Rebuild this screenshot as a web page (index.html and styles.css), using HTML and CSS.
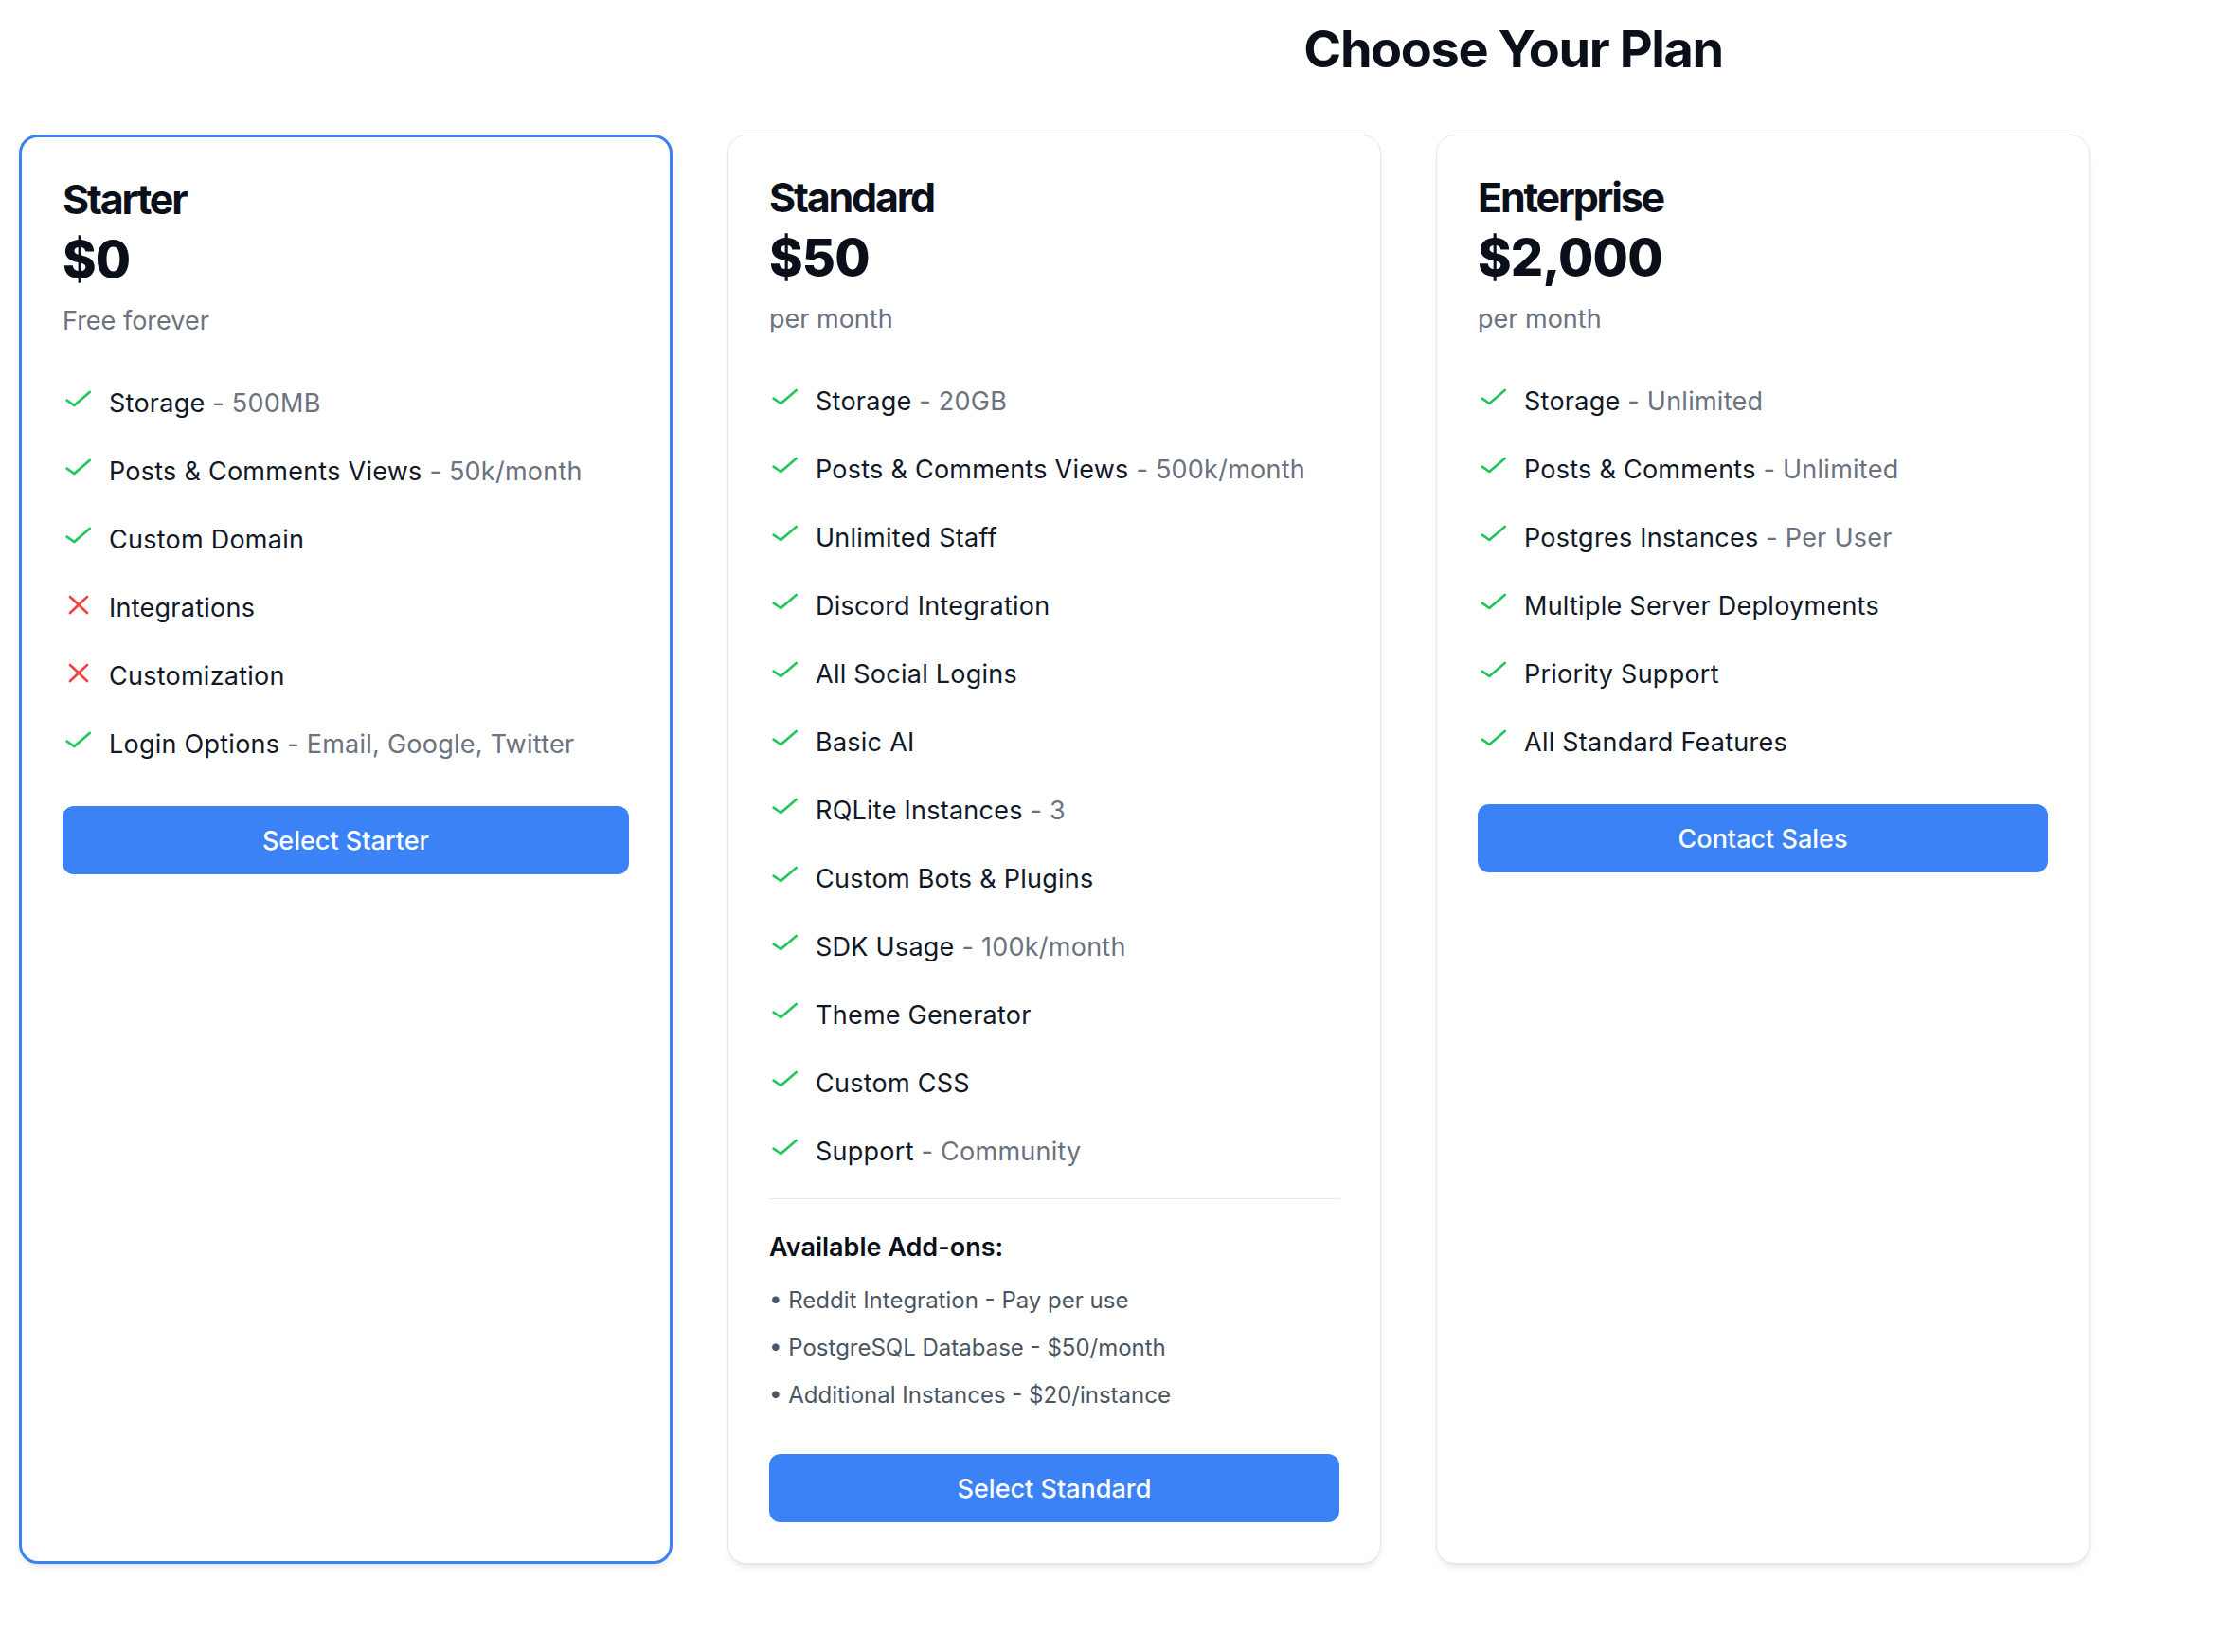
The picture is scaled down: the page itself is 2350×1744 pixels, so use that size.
FILE: index.html
```html
<!DOCTYPE html>
<html lang="en">
<head>
<meta charset="utf-8">
<title>Choose Your Plan</title>
<link rel="stylesheet" href="styles.css">
</head>
<body>
<main class="page">
  <h1 class="title">Choose Your Plan</h1>
  <div class="plans">
    <section class="plan plan--selected">
      <h2 class="plan-name">Starter</h2>
      <div class="plan-price">$0</div>
      <p class="plan-period">Free forever</p>
      <ul class="features">
        <li class="feature"><svg class="icon icon-check" viewBox="0 0 30 22"><path d="M2.7 11.7 L10.3 17 L26.7 3"/></svg><span>Storage<span class="detail"> - 500MB</span></span></li>
        <li class="feature"><svg class="icon icon-check" viewBox="0 0 30 22"><path d="M2.7 11.7 L10.3 17 L26.7 3"/></svg><span>Posts &amp; Comments Views<span class="detail"> - 50k/month</span></span></li>
        <li class="feature"><svg class="icon icon-check" viewBox="0 0 30 22"><path d="M2.7 11.7 L10.3 17 L26.7 3"/></svg><span>Custom Domain</span></li>
        <li class="feature"><svg class="icon icon-x" viewBox="0 0 30 22"><path d="M6 3 L24 20 M24 3 L6 20"/></svg><span>Integrations</span></li>
        <li class="feature"><svg class="icon icon-x" viewBox="0 0 30 22"><path d="M6 3 L24 20 M24 3 L6 20"/></svg><span>Customization</span></li>
        <li class="feature"><svg class="icon icon-check" viewBox="0 0 30 22"><path d="M2.7 11.7 L10.3 17 L26.7 3"/></svg><span>Login Options<span class="detail"> - Email, Google, Twitter</span></span></li>
      </ul>
      <button class="plan-btn">Select Starter</button>
    </section>

    <section class="plan">
      <h2 class="plan-name">Standard</h2>
      <div class="plan-price">$50</div>
      <p class="plan-period">per month</p>
      <ul class="features">
        <li class="feature"><svg class="icon icon-check" viewBox="0 0 30 22"><path d="M2.7 11.7 L10.3 17 L26.7 3"/></svg><span>Storage<span class="detail"> - 20GB</span></span></li>
        <li class="feature"><svg class="icon icon-check" viewBox="0 0 30 22"><path d="M2.7 11.7 L10.3 17 L26.7 3"/></svg><span>Posts &amp; Comments Views<span class="detail"> - 500k/month</span></span></li>
        <li class="feature"><svg class="icon icon-check" viewBox="0 0 30 22"><path d="M2.7 11.7 L10.3 17 L26.7 3"/></svg><span>Unlimited Staff</span></li>
        <li class="feature"><svg class="icon icon-check" viewBox="0 0 30 22"><path d="M2.7 11.7 L10.3 17 L26.7 3"/></svg><span>Discord Integration</span></li>
        <li class="feature"><svg class="icon icon-check" viewBox="0 0 30 22"><path d="M2.7 11.7 L10.3 17 L26.7 3"/></svg><span>All Social Logins</span></li>
        <li class="feature"><svg class="icon icon-check" viewBox="0 0 30 22"><path d="M2.7 11.7 L10.3 17 L26.7 3"/></svg><span>Basic AI</span></li>
        <li class="feature"><svg class="icon icon-check" viewBox="0 0 30 22"><path d="M2.7 11.7 L10.3 17 L26.7 3"/></svg><span>RQLite Instances<span class="detail"> - 3</span></span></li>
        <li class="feature"><svg class="icon icon-check" viewBox="0 0 30 22"><path d="M2.7 11.7 L10.3 17 L26.7 3"/></svg><span>Custom Bots &amp; Plugins</span></li>
        <li class="feature"><svg class="icon icon-check" viewBox="0 0 30 22"><path d="M2.7 11.7 L10.3 17 L26.7 3"/></svg><span>SDK Usage<span class="detail"> - 100k/month</span></span></li>
        <li class="feature"><svg class="icon icon-check" viewBox="0 0 30 22"><path d="M2.7 11.7 L10.3 17 L26.7 3"/></svg><span>Theme Generator</span></li>
        <li class="feature"><svg class="icon icon-check" viewBox="0 0 30 22"><path d="M2.7 11.7 L10.3 17 L26.7 3"/></svg><span>Custom CSS</span></li>
        <li class="feature"><svg class="icon icon-check" viewBox="0 0 30 22"><path d="M2.7 11.7 L10.3 17 L26.7 3"/></svg><span>Support<span class="detail"> - Community</span></span></li>
      </ul>
      <div class="addons">
        <h3 class="addons-title">Available Add-ons:</h3>
        <ul class="addons-list">
          <li>• Reddit Integration - Pay per use</li>
          <li>• PostgreSQL Database - $50/month</li>
          <li>• Additional Instances - $20/instance</li>
        </ul>
      </div>
      <button class="plan-btn">Select Standard</button>
    </section>

    <section class="plan">
      <h2 class="plan-name">Enterprise</h2>
      <div class="plan-price">$2,000</div>
      <p class="plan-period">per month</p>
      <ul class="features">
        <li class="feature"><svg class="icon icon-check" viewBox="0 0 30 22"><path d="M2.7 11.7 L10.3 17 L26.7 3"/></svg><span>Storage<span class="detail"> - Unlimited</span></span></li>
        <li class="feature"><svg class="icon icon-check" viewBox="0 0 30 22"><path d="M2.7 11.7 L10.3 17 L26.7 3"/></svg><span>Posts &amp; Comments<span class="detail"> - Unlimited</span></span></li>
        <li class="feature"><svg class="icon icon-check" viewBox="0 0 30 22"><path d="M2.7 11.7 L10.3 17 L26.7 3"/></svg><span>Postgres Instances<span class="detail"> - Per User</span></span></li>
        <li class="feature"><svg class="icon icon-check" viewBox="0 0 30 22"><path d="M2.7 11.7 L10.3 17 L26.7 3"/></svg><span>Multiple Server Deployments</span></li>
        <li class="feature"><svg class="icon icon-check" viewBox="0 0 30 22"><path d="M2.7 11.7 L10.3 17 L26.7 3"/></svg><span>Priority Support</span></li>
        <li class="feature"><svg class="icon icon-check" viewBox="0 0 30 22"><path d="M2.7 11.7 L10.3 17 L26.7 3"/></svg><span>All Standard Features</span></li>
      </ul>
      <button class="plan-btn">Contact Sales</button>
    </section>
  </div>
</main>
</body>
</html>
```

FILE: styles.css
```css
* { box-sizing: border-box; }

body {
  margin: 0;
  background: #ffffff;
  color: #111827;
  font-family: Inter, "Noto Sans", "Liberation Sans", sans-serif;
}

.page {
  padding: 22px 0 60px 20px;
}

.title {
  margin: 0 0 60px;
  padding-left: 825px;
  text-align: center;
  font-size: 54px;
  line-height: 60px;
  font-weight: 700;
  letter-spacing: -1.4px;
  color: #0b0f1a;
}

.plans {
  display: grid;
  grid-template-columns: repeat(3, 690px);
  column-gap: 58px;
  align-items: stretch;
}

.plan {
  background: #ffffff;
  border: 1px solid #e7e7ea;
  border-radius: 20px;
  padding: 39px 43px 43px;
  box-shadow: 0 5px 9px -2px rgba(0, 0, 0, 0.08), 0 2px 5px -2px rgba(0, 0, 0, 0.07);
}

.plan--selected {
  border: 3px solid #3b82f6;
}

.plan-name {
  margin: 0;
  font-size: 43px;
  line-height: 52px;
  font-weight: 700;
  letter-spacing: -2.2px;
  color: #0b0f1a;
}

.plan-price {
  margin-top: 8px;
  font-size: 54px;
  line-height: 60px;
  font-weight: 800;
  letter-spacing: -0.8px;
  color: #0b0f1a;
}

.plan-period {
  margin: 14px 0 0;
  font-size: 27px;
  line-height: 42px;
  color: #6b7280;
}

.features {
  list-style: none;
  margin: 45px 0 0;
  padding: 0;
  display: flex;
  flex-direction: column;
  gap: 30px;
}

.feature {
  display: flex;
  align-items: flex-start;
  gap: 17px;
  font-size: 27px;
  line-height: 42px;
  letter-spacing: 0.25px;
}

.detail {
  color: #6b7280;
}

.icon {
  flex: none;
  width: 30px;
  height: 22px;
  margin: 6px 0 0 2px;
  fill: none;
  stroke-width: 2.7;
  stroke-linecap: round;
  stroke-linejoin: round;
  overflow: visible;
}

.icon-check { stroke: #22c55e; }
.icon-x { stroke: #ef4444; }

.addons {
  margin-top: 28px;
  padding-top: 30px;
  border-top: 1.5px solid #e5e7eb;
}

.addons-title {
  margin: 0;
  font-size: 27px;
  line-height: 42px;
  font-weight: 600;
  color: #0b0f1a;
}

.addons-list {
  list-style: none;
  margin: 17px 0 0;
  padding: 0;
  display: flex;
  flex-direction: column;
  gap: 14px;
  font-size: 24px;
  line-height: 36px;
  color: #4b5563;
}

.plan-btn {
  display: block;
  width: 100%;
  height: 72px;
  margin-top: 44px;
  border: none;
  border-radius: 12px;
  background: #3b82f6;
  color: #ffffff;
  font-family: inherit;
  font-size: 27px;
  font-weight: 500;
  cursor: pointer;
}
```
